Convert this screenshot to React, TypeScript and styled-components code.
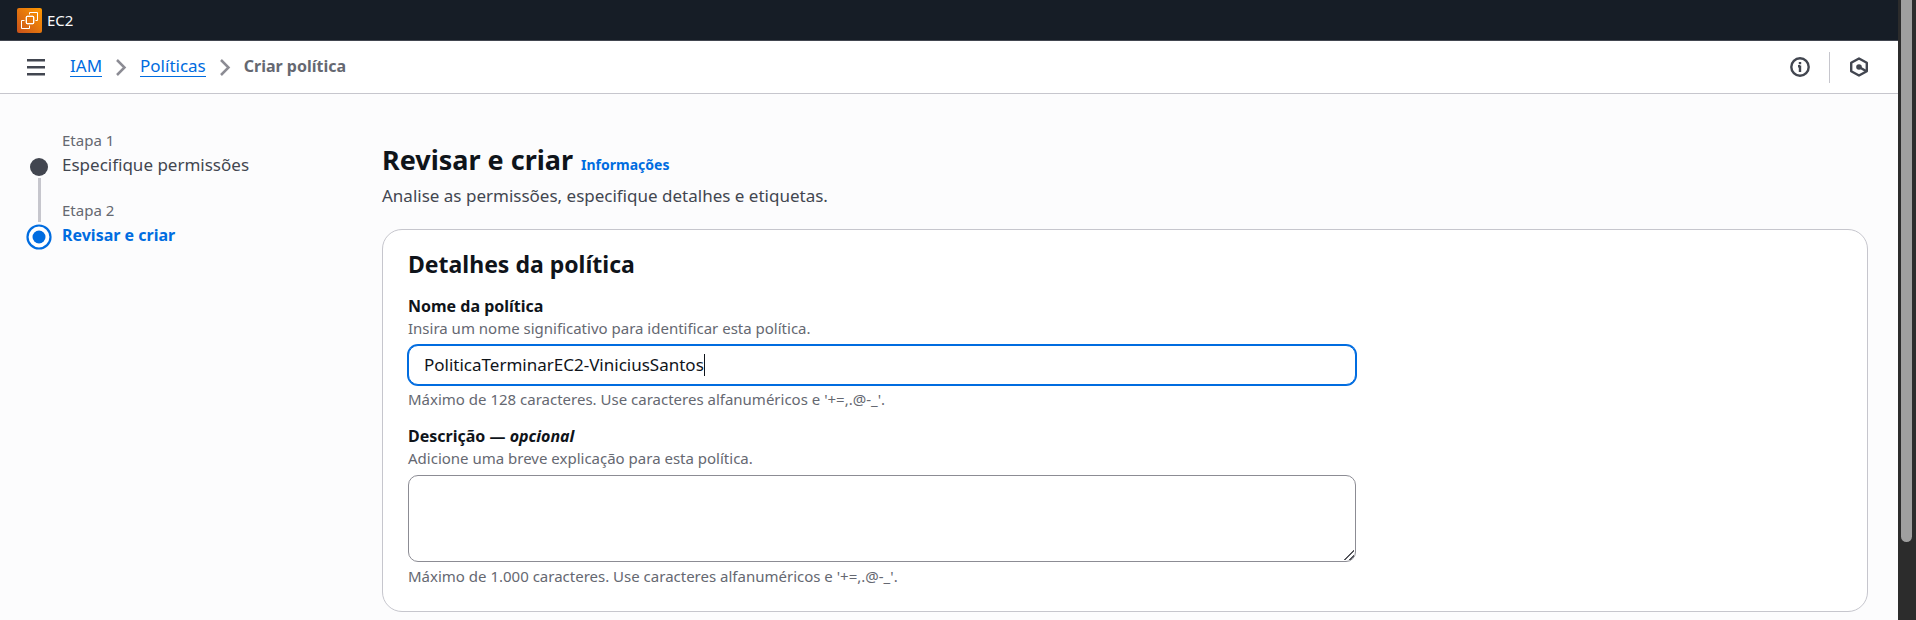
import React, { useLayoutEffect, useRef, useState } from "react";
import styled, { createGlobalStyle, css } from "styled-components";

const GlobalStyle = createGlobalStyle`
  *, *::before, *::after { box-sizing: border-box; }
  body {
    margin: 0;
    background: #fcfcfd;
    color: #0f141a;
    font-family: "Noto Sans", "Open Sans", sans-serif;
    font-size: 17px;
    line-height: 24px;
  }
  h1, h2, p, ol { margin: 0; padding: 0; }
`;

const Shell = styled.div`
  display: flex;
  min-height: 100vh;
`;

const Page = styled.div`
  flex: 1;
  min-width: 0;
`;

const ScrollRail = styled.div`
  display: flex;
  justify-content: center;
  width: 18px;
  padding-right: 1px;
  background: #2c2c2c;
`;

const ScrollThumb = styled.div`
  width: 11px;
  height: 542px;
  max-height: 88vh;
  border-radius: 0 0 6px 6px;
  background: #9f9f9f;
`;

const ServiceBar = styled.header`
  display: flex;
  align-items: center;
  height: 41px;
  padding: 0 17px;
  background: #161d26;
  border-bottom: 1px solid #424650;
`;

const ServiceLink = styled.a`
  display: flex;
  align-items: center;
  gap: 5px;
  color: #f9f9fa;
  font-size: 15px;
  text-decoration: none;
`;

const TopNav = styled.div`
  display: flex;
  align-items: center;
  height: 53px;
  padding: 0 25px;
  background: #ffffff;
  border-bottom: 1px solid #c6c6cd;
`;

const IconButton = styled.button`
  display: flex;
  align-items: center;
  justify-content: center;
  padding: 0;
  border: 0;
  background: none;
  color: #424650;
`;

const Crumbs = styled.nav`
  display: flex;
  align-items: center;
  gap: 13px;
  flex: 1;
  margin-left: 23px;
`;

const CrumbLink = styled.a`
  margin-bottom: 2px;
  color: #006ce0;
  text-decoration: none;
  line-height: 20px;
  border-bottom: 1px solid #006ce0;
`;

const CurrentCrumb = styled.span`
  color: #656871;
  font-size: 16px;
  font-weight: 700;
  line-height: 20px;
  padding-bottom: 3px;
`;

const Tools = styled.div`
  display: flex;
  align-items: center;
  gap: 19px;
  padding-right: 4px;
`;

const Divider = styled.span`
  width: 1px;
  height: 31px;
  background: #c6c6cd;
`;

const Body = styled.div`
  display: grid;
  grid-template-columns: 320px minmax(0, 1fr);
  gap: 37px;
  padding: 35px 30px 8px 25px;
`;

const Steps = styled.ol`
  list-style: none;
`;

const Step = styled.li`
  display: grid;
  grid-template-columns: 28px 1fr;
  gap: 9px;
  min-height: 70px;
`;

const StepTrack = styled.div`
  display: flex;
  flex-direction: column;
  align-items: center;
  padding-top: 25px;
`;

const StepLine = styled.span`
  flex: 1;
  width: 3px;
  margin: -2px 0 -23px;
  background: #c6c6cd;
`;

const StepText = styled.div`
  display: flex;
  flex-direction: column;
`;

const StepCount = styled.span`
  padding-bottom: 2px;
  color: #656871;
  font-size: 15px;
  line-height: 22px;
`;

const StepName = styled.a<{ $active?: boolean }>`
  color: ${(p) => (p.$active ? "#006ce0" : "#424650")};
  font-size: ${(p) => (p.$active ? "16px" : "17px")};
  font-weight: ${(p) => (p.$active ? 700 : 400)};
  text-decoration: none;
`;

const Main = styled.main`
  padding-top: 11px;
`;

const TitleRow = styled.div`
  display: flex;
  align-items: baseline;
  gap: 8px;
`;

const Title = styled.h1`
  font-size: 27px;
  line-height: 40px;
`;

const InfoLink = styled.a`
  color: #006ce0;
  font-size: 14px;
  font-weight: 700;
  text-decoration: none;
`;

const Lead = styled.p`
  margin-top: 4px;
  color: #424650;
`;

const Card = styled.section`
  display: flex;
  flex-direction: column;
  gap: 15px;
  margin-top: 21px;
  padding: 19px 25px 23px;
  border: 1px solid #c6c6cd;
  border-radius: 20px;
  background: #ffffff;
`;

const CardTitle = styled.h2`
  font-size: 23px;
  line-height: 30px;
`;

const FormGrid = styled.div`
  display: grid;
  grid-template-columns: repeat(3, minmax(0, 1fr));
  gap: 25px;
`;

const Fields = styled.div`
  display: flex;
  flex-direction: column;
  grid-column: span 2;
  gap: 13px;
`;

const Field = styled.div`
  display: flex;
  flex-direction: column;
`;

const Label = styled.label`
  font-size: 16px;
  font-weight: 700;
`;

const Hint = styled.p`
  && {
    padding-bottom: 2px;
  }
  color: #656871;
  font-size: 15px;
  line-height: 20px;
`;

const control = css`
  display: block;
  width: 100%;
  border: 1px solid #8c8c94;
  border-radius: 10px;
  background: #ffffff;
  color: #0f141a;
  font: inherit;
  outline: none;
`;

const InputWrap = styled.div`
  position: relative;
  margin: 5px 0 4px;
`;

const TextInput = styled.input`
  ${control}
  height: 40px;
  padding: 0 15px 2px;
  border-color: #006ce0;
  box-shadow: 0 0 0 1px #006ce0;
  caret-color: transparent;
`;

const Caret = styled.span`
  position: absolute;
  top: 9px;
  width: 1px;
  height: 22px;
  background: #0f141a;
`;

const TextArea = styled.textarea`
  ${control}
  height: 87px;
  margin: 5px 0 4px;
  padding: 5px 15px;
  resize: vertical;

  &::-webkit-resizer {
    background: linear-gradient(
        135deg,
        transparent 0 46%,
        #55565c 46% 56%,
        transparent 56% 72%,
        #55565c 72% 82%,
        transparent 82%
      )
      right 1px bottom 1px / 10px 10px no-repeat;
  }
`;

function Ec2Icon() {
  return (
    <svg width="25" height="25" viewBox="0 0 25 25" fill="none" aria-hidden="true">
      <defs>
        <linearGradient id="ec2" x1="0" y1="25" x2="25" y2="0" gradientUnits="userSpaceOnUse">
          <stop stopColor="#c8511b" />
          <stop offset="1" stopColor="#f90" />
        </linearGradient>
      </defs>
      <rect width="25" height="25" rx="2" fill="url(#ec2)" />
      <g stroke="#fff">
        <rect x="9.5" y="8.5" width="7" height="7" />
        <path d="M12.5 6.5V4.5H20.5V12.5H18.5M7.500 12.500H4.500V20.500H12.500V17.500" />
        <path d="M11 7V8.500M13 7V8.500M15 7V8.500M11 15.500V17M13 15.500V17M15 15.500V17M8 10H9.500M8 12H9.500M8 14H9.500M16.500 10H18M16.500 12H18M16.500 14H18" strokeWidth="0.7" />
      </g>
    </svg>
  );
}

function MenuIcon() {
  return (
    <svg width="22" height="20" viewBox="0 0 22 20" stroke="currentColor" strokeWidth="2.500" aria-hidden="true">
      <path d="M2 3.250H20M2 10.250H20M2 17.250H20" />
    </svg>
  );
}

function Chevron() {
  return (
    <svg width="12" height="20" viewBox="0 0 12 20" fill="none" stroke="#8c8c94" strokeWidth="2.500" aria-hidden="true">
      <path d="M2 3L9.500 10.500L2 18" />
    </svg>
  );
}

function InfoIcon() {
  return (
    <svg width="20" height="20" viewBox="0 0 20 20" fill="none" stroke="currentColor" strokeWidth="2.400" aria-hidden="true">
      <circle cx="10" cy="10" r="8.700" />
      <path d="M10 8.500V15M10 5V7.300M8 9.200H10" />
    </svg>
  );
}

function HexIcon() {
  return (
    <svg width="20" height="20" viewBox="0 0 20 20" fill="none" stroke="currentColor" strokeWidth="2.400" aria-hidden="true">
      <path d="M10 1.500L17.800 5.800V14.200L10 18.500L2.200 14.200V5.800Z" strokeLinejoin="round" />
      <circle cx="10" cy="10" r="2.800" fill="currentColor" stroke="none" />
      <path d="M10 10L17 14" />
    </svg>
  );
}

function StepDot({ active }: { active?: boolean }) {
  return active ? (
    <svg width="26" height="26" viewBox="0 0 26 26" aria-hidden="true">
      <circle cx="13" cy="13" r="11.500" fill="#fff" stroke="#006ce0" strokeWidth="2.200" />
      <circle cx="13" cy="13" r="6.500" fill="#006ce0" />
    </svg>
  ) : (
    <svg width="26" height="26" viewBox="0 0 26 26" aria-hidden="true">
      <circle cx="13" cy="13" r="9" fill="#424650" />
    </svg>
  );
}

function PolicyNameInput() {
  const ref = useRef<HTMLInputElement>(null);
  const [value, setValue] = useState("PoliticaTerminarEC2-ViniciusSantos");
  const [caret, setCaret] = useState(0);

  useLayoutEffect(() => {
    const ctx = document.createElement("canvas").getContext("2d");
    if (!ctx || !ref.current) return;
    const style = getComputedStyle(ref.current);
    ctx.font = `${style.fontWeight} ${style.fontSize} ${style.fontFamily}`;
    setCaret(Math.round(ctx.measureText(value).width) + 16);
  }, [value]);

  return (
    <InputWrap>
      <TextInput
        id="policy-name"
        ref={ref}
        value={value}
        aria-describedby="name-hint name-limit"
        onChange={(e) => setValue(e.target.value)}
      />
      <Caret style={{ left: caret }} />
    </InputWrap>
  );
}

export default function App() {
  return (
    <>
      <GlobalStyle />
      <Shell>
        <Page>
          <ServiceBar>
            <ServiceLink href="#ec2">
              <Ec2Icon />
              EC2
            </ServiceLink>
          </ServiceBar>
          <TopNav>
            <IconButton type="button" aria-label="Abrir navegação">
              <MenuIcon />
            </IconButton>
            <Crumbs aria-label="Trilha">
              <CrumbLink href="#iam">IAM</CrumbLink>
              <Chevron />
              <CrumbLink href="#politicas">Políticas</CrumbLink>
              <Chevron />
              <CurrentCrumb aria-current="page">Criar política</CurrentCrumb>
            </Crumbs>
            <Tools>
              <IconButton type="button" aria-label="Informações">
                <InfoIcon />
              </IconButton>
              <Divider />
              <IconButton type="button" aria-label="Ferramentas">
                <HexIcon />
              </IconButton>
            </Tools>
          </TopNav>
          <Body>
            <Steps>
              <Step>
                <StepTrack>
                  <StepDot />
                  <StepLine />
                </StepTrack>
                <StepText>
                  <StepCount>Etapa 1</StepCount>
                  <StepName href="#permissoes">Especifique permissões</StepName>
                </StepText>
              </Step>
              <Step>
                <StepTrack>
                  <StepDot active />
                </StepTrack>
                <StepText>
                  <StepCount>Etapa 2</StepCount>
                  <StepName $active aria-current="step">
                    Revisar e criar
                  </StepName>
                </StepText>
              </Step>
            </Steps>
            <Main>
              <TitleRow>
                <Title>Revisar e criar</Title>
                <InfoLink href="#info">Informações</InfoLink>
              </TitleRow>
              <Lead>Analise as permissões, especifique detalhes e etiquetas.</Lead>
              <Card>
                <CardTitle>Detalhes da política</CardTitle>
                <FormGrid>
                  <Fields>
                    <Field>
                      <Label htmlFor="policy-name">Nome da política</Label>
                      <Hint id="name-hint">Insira um nome significativo para identificar esta política.</Hint>
                      <PolicyNameInput />
                      <Hint id="name-limit">Máximo de 128 caracteres. Use caracteres alfanuméricos e '+=,.@-_'.</Hint>
                    </Field>
                    <Field>
                      <Label htmlFor="policy-description">
                        Descrição — <i>opcional</i>
                      </Label>
                      <Hint id="desc-hint">Adicione uma breve explicação para esta política.</Hint>
                      <TextArea id="policy-description" aria-describedby="desc-hint desc-limit" />
                      <Hint id="desc-limit">Máximo de 1.000 caracteres. Use caracteres alfanuméricos e '+=,.@-_'.</Hint>
                    </Field>
                  </Fields>
                </FormGrid>
              </Card>
            </Main>
          </Body>
        </Page>
        <ScrollRail>
          <ScrollThumb />
        </ScrollRail>
      </Shell>
    </>
  );
}
